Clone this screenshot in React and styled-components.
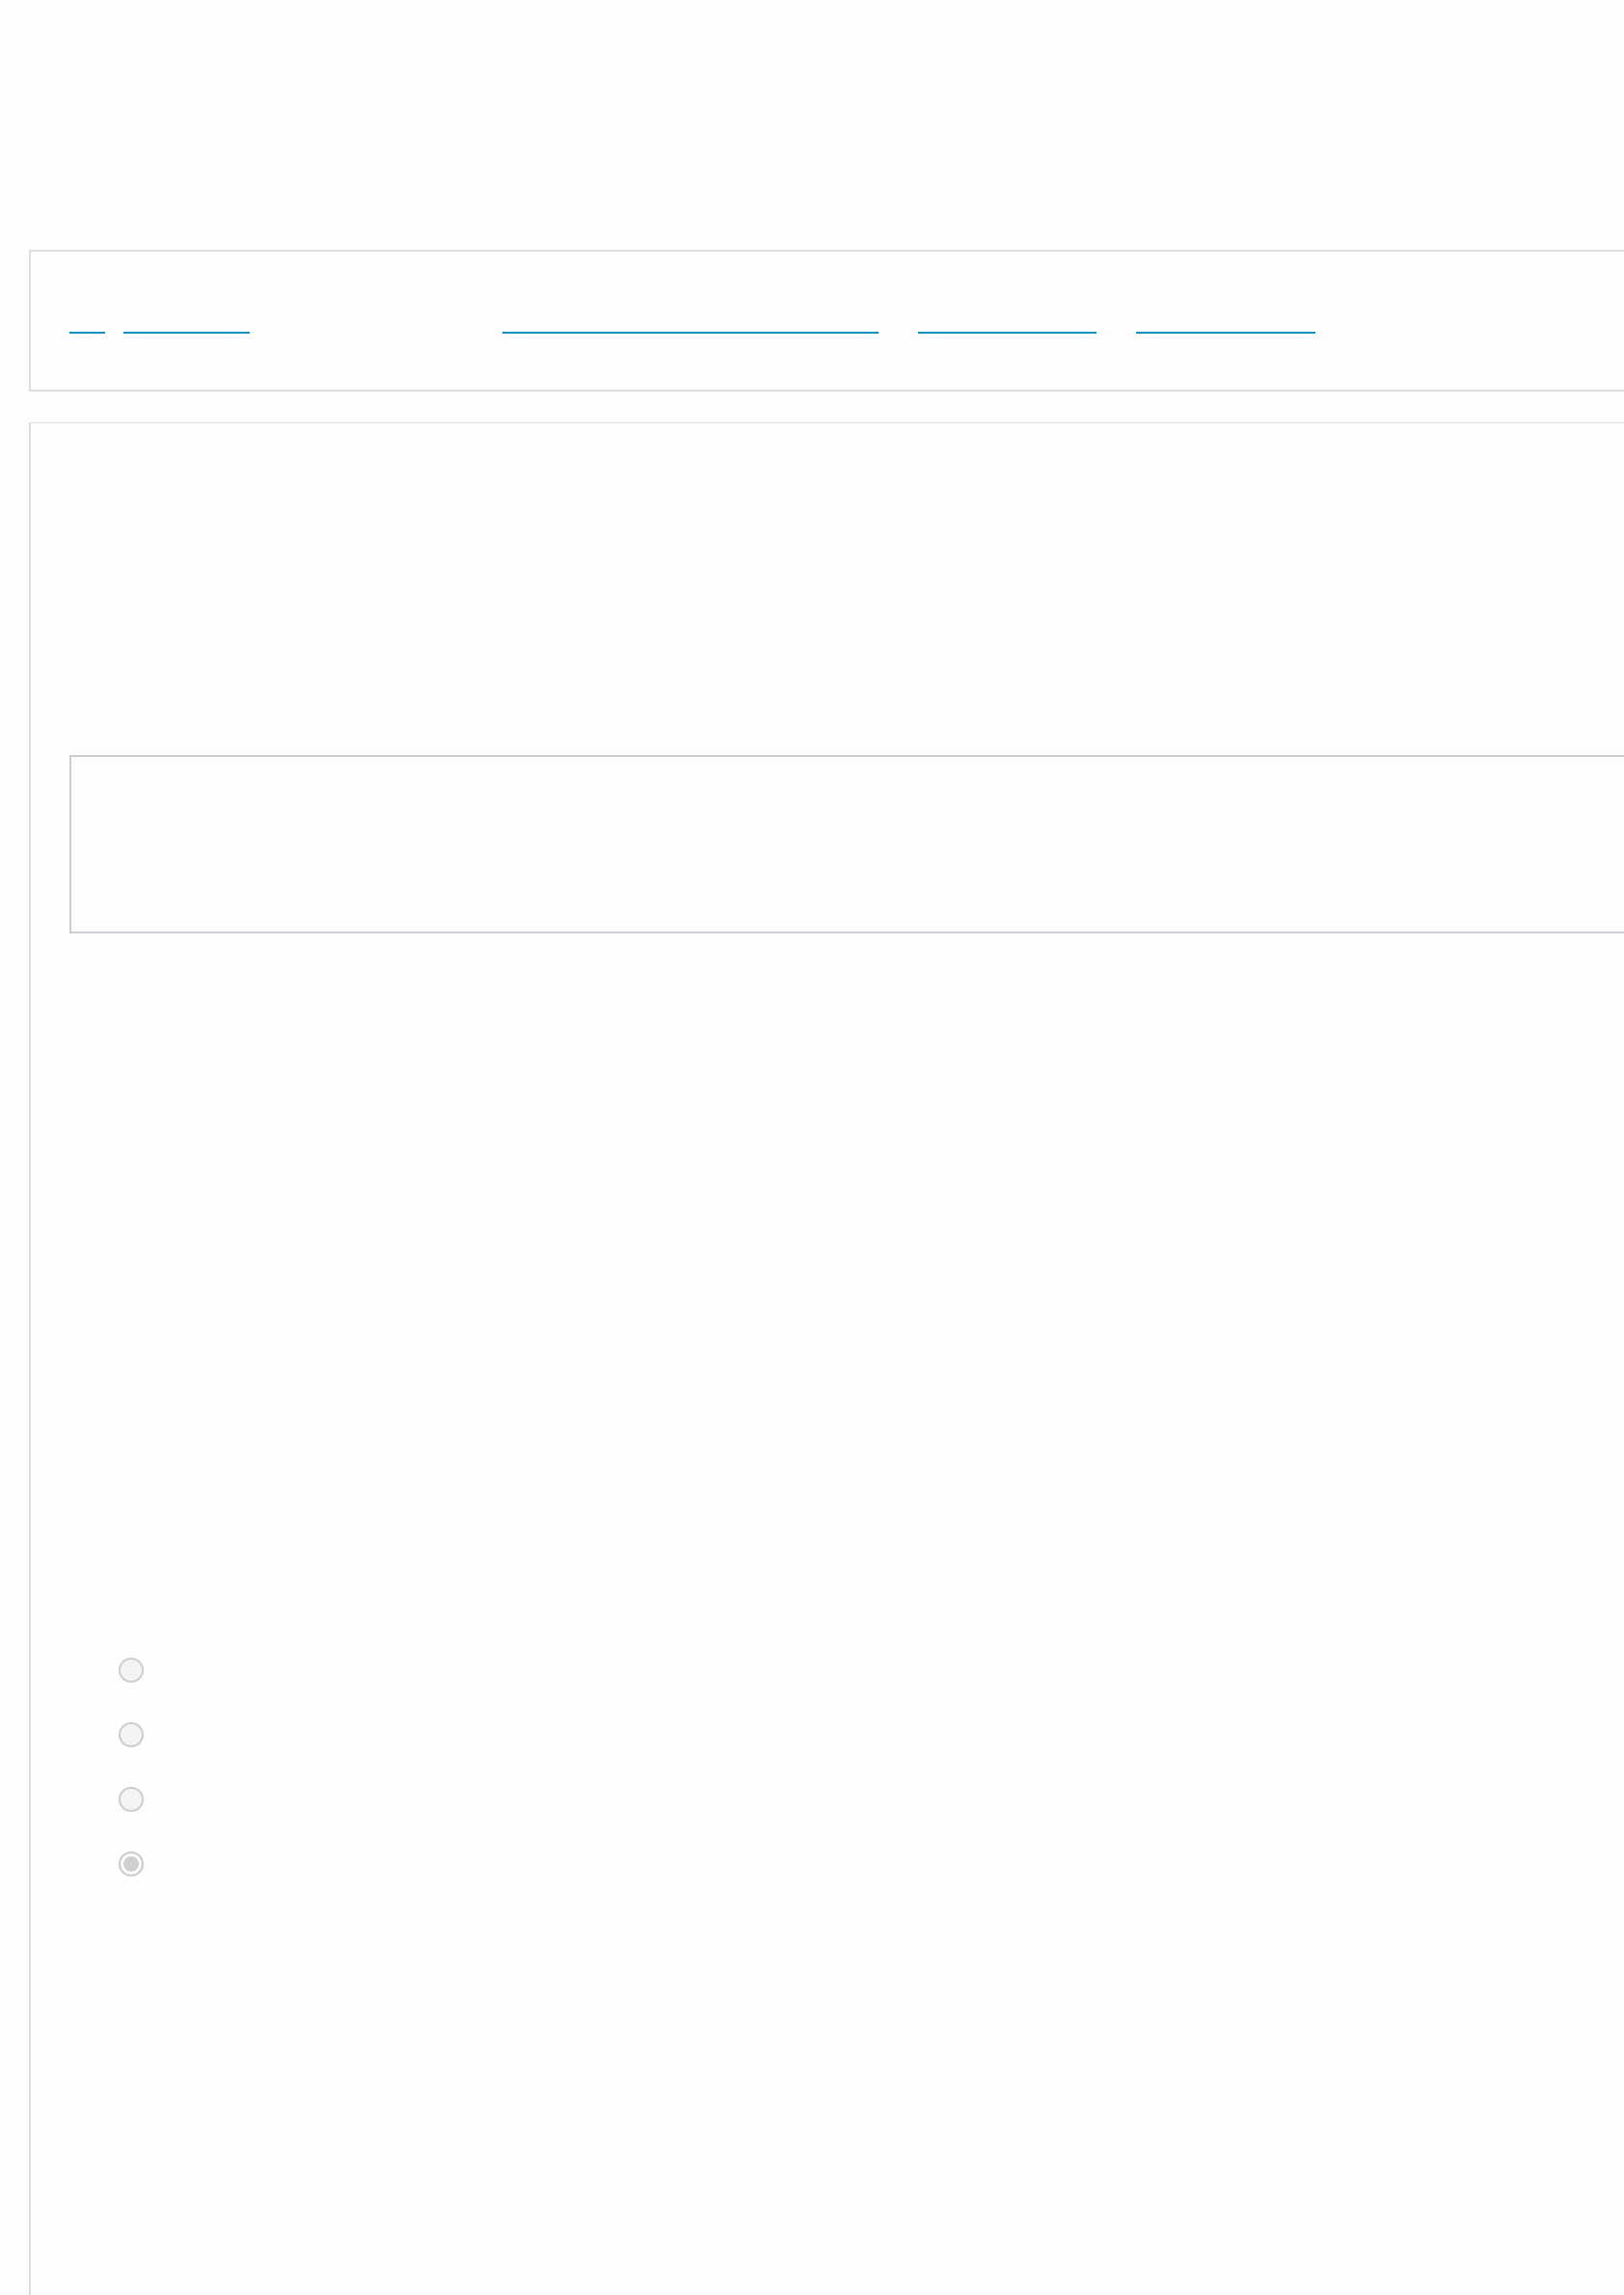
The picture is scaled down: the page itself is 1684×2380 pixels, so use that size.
import React from "react";
import styled, { createGlobalStyle } from "styled-components";

const GlobalStyle = createGlobalStyle`
  html, body {
    margin: 0;
    padding: 0;
    background: #fefefe;
    font-family: "Open Sans", "Liberation Sans", Arial, sans-serif;
    overflow: hidden;
  }
  #root {
    overflow: hidden;
  }
`;

// Contenedor general de la página
const Page = styled.div`
  padding: 259px 0 0 30px;
  min-height: 2380px;
  box-sizing: border-box;
  overflow: hidden;
`;

// Barra superior con los enlaces
const TopBar = styled.header`
  width: 1720px;
  height: 147px;
  box-sizing: border-box;
  border: 2px solid #dedede;
  border-right: none;
  background: #fefefe;
`;

const Nav = styled.nav`
  display: flex;
  align-items: flex-start;
  padding: 63px 0 0 40px;
`;

const NavLink = styled.a`
  display: block;
  width: ${(p) => p.$w}px;
  height: 20px;
  margin-left: ${(p) => p.$gap || 0}px;
  border-bottom: 2px solid #0992c6;
  color: transparent;
  font-size: 14px;
  text-decoration: none;
  overflow: hidden;
`;

// Panel principal
const Panel = styled.main`
  margin-top: 32px;
  width: 1720px;
  min-height: 1960px;
  box-sizing: border-box;
  border-top: 1px solid #e3e3e3;
  border-left: 2px solid #dcdcdc;
  padding: 344px 0 0 40px;
`;

const InfoBox = styled.section`
  height: 185px;
  box-sizing: border-box;
  border: 2px solid #c9ced6;
  border-right: none;
`;

const RadioList = styled.div`
  display: flex;
  flex-direction: column;
  gap: 41px;
  margin-top: 751px;
  padding-left: 51px;
`;

const Radio = styled.input.attrs({ type: "radio" })`
  appearance: none;
  margin: 0;
  width: 26px;
  height: 26px;
  box-sizing: border-box;
  border-radius: 50%;
  border: 2px solid #cccccc;
  background: #f4f4f4;

  &:checked {
    background: #ffffff;
    box-shadow: inset 0 0 0 3px #ffffff, inset 0 0 0 11px #cfcfcf;
  }
`;

const links = [
  { w: 37, gap: 0 },
  { w: 131, gap: 19 },
  { w: 390, gap: 262 },
  { w: 185, gap: 41 },
  { w: 186, gap: 41 },
];

export default function App() {
  return (
    <>
      <GlobalStyle />
      <Page>
        <TopBar>
          <Nav>
            {links.map((l, i) => (
              <NavLink key={i} href="#" $w={l.w} $gap={l.gap} />
            ))}
          </Nav>
        </TopBar>
        <Panel>
          <InfoBox />
          <RadioList>
            <Radio name="opt" readOnly />
            <Radio name="opt" readOnly />
            <Radio name="opt" readOnly />
            <Radio name="opt" defaultChecked />
          </RadioList>
        </Panel>
      </Page>
    </>
  );
}
